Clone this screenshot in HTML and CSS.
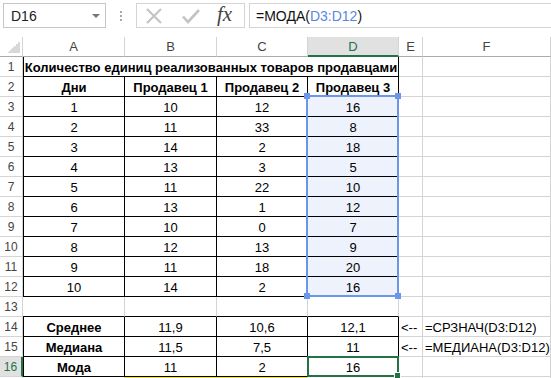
FILE: index.html
```html
<!DOCTYPE html>
<html lang="ru">
<head>
<meta charset="UTF-8">
<title>МОДА</title>
<link rel="stylesheet" href="styles.css">
</head>
<body>
    <!-- formula bar -->
    <div class="bar">
        <div class="namebox"><span>D16</span><span class="arrow"></span></div>
        <div class="grip"></div>
        <div class="fxbox">
            <svg class="ico-x" width="16" height="16" viewBox="0 0 16 16"><path d="M1 1L15 15M15 1L1 15" stroke="#c4c4c4" stroke-width="2.2" fill="none"/></svg>
            <svg class="ico-ok" width="18" height="15" viewBox="0 0 18 15"><path d="M1 7.5L6 13L17 1" stroke="#c4c4c4" stroke-width="2.6" fill="none"/></svg>
            <span class="fx">fx</span>
        </div>
        <div class="formula">=МОДА(<span class="ref">D3:D12</span>)</div>
    </div>

    <!-- sheet -->
    <div class="sheet">
        <div class="corner"><span></span></div>
        <div class="ch">A</div><div class="ch">B</div><div class="ch">C</div><div class="ch on">D</div><div class="ch">E</div><div class="ch">F</div>

        <div class="rh">1</div><div class="c t l b span4">Количество единиц реализованных товаров продавцами</div><div class="c"></div><div class="c"></div>
        <div class="rh">2</div><div class="c t l b">Дни</div><div class="c t b">Продавец 1</div><div class="c t b">Продавец 2</div><div class="c t b">Продавец 3</div><div class="c"></div><div class="c"></div>
        <div class="rh">3</div><div class="c t l">1</div><div class="c t">10</div><div class="c t">12</div><div class="c t hl anchor">16<div class="range"><i class="h1"></i><i class="h2"></i><i class="h3"></i><i class="h4"></i></div></div><div class="c"></div><div class="c"></div>
        <div class="rh">4</div><div class="c t l">2</div><div class="c t">11</div><div class="c t">33</div><div class="c t hl">8</div><div class="c"></div><div class="c"></div>
        <div class="rh">5</div><div class="c t l">3</div><div class="c t">14</div><div class="c t">2</div><div class="c t hl">18</div><div class="c"></div><div class="c"></div>
        <div class="rh">6</div><div class="c t l">4</div><div class="c t">13</div><div class="c t">3</div><div class="c t hl">5</div><div class="c"></div><div class="c"></div>
        <div class="rh">7</div><div class="c t l">5</div><div class="c t">11</div><div class="c t">22</div><div class="c t hl">10</div><div class="c"></div><div class="c"></div>
        <div class="rh">8</div><div class="c t l">6</div><div class="c t">13</div><div class="c t">1</div><div class="c t hl">12</div><div class="c"></div><div class="c"></div>
        <div class="rh">9</div><div class="c t l">7</div><div class="c t">10</div><div class="c t">0</div><div class="c t hl">7</div><div class="c"></div><div class="c"></div>
        <div class="rh">10</div><div class="c t l">8</div><div class="c t">12</div><div class="c t">13</div><div class="c t hl">9</div><div class="c"></div><div class="c"></div>
        <div class="rh">11</div><div class="c t l">9</div><div class="c t">11</div><div class="c t">18</div><div class="c t hl">20</div><div class="c"></div><div class="c"></div>
        <div class="rh">12</div><div class="c t l">10</div><div class="c t">14</div><div class="c t">2</div><div class="c t hl">16</div><div class="c"></div><div class="c"></div>
        <div class="rh">13</div><div class="c tb"></div><div class="c tb"></div><div class="c tb"></div><div class="c tb"></div><div class="c"></div><div class="c"></div>
        <div class="rh">14</div><div class="c t l b">Среднее</div><div class="c t">11,9</div><div class="c t">10,6</div><div class="c t">12,1</div><div class="c left">&lt;--</div><div class="c left">=СРЗНАЧ(D3:D12)</div>
        <div class="rh">15</div><div class="c t l b">Медиана</div><div class="c t">11,5</div><div class="c t">7,5</div><div class="c t">11</div><div class="c left">&lt;--</div><div class="c left">=МЕДИАНА(D3:D12)</div>
        <div class="rh on">16</div><div class="c t l b">Мода</div><div class="c t">11</div><div class="c t">2</div><div class="c t anchor">16<div class="active"><i></i></div></div><div class="c"></div><div class="c"></div>
        <div class="stub"></div><div class="stub"></div><div class="stub yl"></div><div class="stub yl"></div><div class="stub"></div><div class="stub"></div><div class="stub"></div>
    </div>
</body>
</html>
```

FILE: styles.css
```css
/* sheet look, excel 2013 style */
body {
    margin: 0;
    font-family: "Liberation Sans", Arial, sans-serif;
    background: #fff;
    color: #000;
}

/* formula bar */
.bar {
    display: flex;
    align-items: flex-start;
    height: 34px;
    padding: 3px 0 0 3px;
    box-sizing: border-box;
}
.namebox {
    width: 103px;
    height: 25px;
    box-sizing: border-box;
    border: 1px solid #c6c6c6;
    display: flex;
    align-items: center;
    justify-content: space-between;
    padding: 0 5px 0 7px;
    font-size: 14px;
    color: #222;
}
.arrow {
    width: 0;
    height: 0;
    border-left: 4px solid transparent;
    border-right: 4px solid transparent;
    border-top: 4px solid #777;
}
.grip {
    width: 2px;
    height: 11px;
    margin: 8px 14px 0 14px;
    background: linear-gradient(#a8a8a8 2px, transparent 2px) 0 0 / 2px 4px repeat-y;
}
.fxbox {
    width: 109px;
    height: 25px;
    box-sizing: border-box;
    border: 1px solid #d4d4d4;
    display: flex;
    align-items: center;
    padding-left: 9px;
}
.ico-ok {
    margin-left: 20px;
    margin-top: 2px;
}
.fx {
    margin-left: 17px;
    font-family: "Liberation Serif", serif;
    font-style: italic;
    font-size: 21px;
    color: #444;
    margin-top: -3px;
}
.formula {
    flex: 1;
    margin-left: 4px;
    height: 25px;
    box-sizing: border-box;
    border: 1px solid #d4d4d4;
    border-right: none;
    padding-left: 6px;
    display: flex;
    align-items: center;
    font-size: 14px;
    color: #111;
}
.ref {
    color: #5b86e0;
}

/* grid */
.sheet {
    display: grid;
    grid-template-columns: 23px 102px 92px 91px 91px 24px 128px;
    grid-template-rows: 23px repeat(16, 20px) 1px;
    font-size: 13px;
}
.corner {
    display: flex;
    align-items: flex-end;
    justify-content: flex-end;
    margin-top: 3px;
    padding: 0 2px 3px 0;
    border-right: 1px solid #d4d4d4;
    border-bottom: 1px solid #ababab;
}
.corner span {
    width: 12px;
    height: 12px;
    background: linear-gradient(to bottom right, transparent 50%, #d8d8d8 50%);
}
.ch {
    margin-top: 3px;
    display: flex;
    align-items: center;
    justify-content: center;
    border-right: 1px solid #d4d4d4;
    border-bottom: 1px solid #ababab;
    color: #444;
    font-size: 13px;
}
.ch.on {
    background: #e1e1e1;
    color: #217346;
    border-bottom: 2px solid #217346;
}
.rh {
    display: flex;
    align-items: center;
    justify-content: center;
    padding-top: 1px;
    border-right: 1px solid #d4d4d4;
    border-bottom: 1px solid #d4d4d4;
    color: #444;
    font-size: 12px;
}
.rh.on {
    background: #e1e1e1;
    color: #217346;
    border-right: 2px solid #217346;
}
.c {
    display: flex;
    align-items: center;
    justify-content: center;
    padding-top: 1px;
    border-right: 1px solid #d4d4d4;
    border-bottom: 1px solid #d4d4d4;
    white-space: nowrap;
}
.c.t {
    border-right-color: #000;
    border-bottom-color: #000;
}
.c.l {
    border-left: 1px solid #000;
}
.c.tb {
    border-bottom-color: #000;
}
.b {
    font-weight: bold;
}
.span4 {
    grid-column: span 4;
}
.left {
    justify-content: flex-start;
    padding-left: 2px;
}
.hl {
    background: #edf2fc;
}
.stub {
    border-right: 1px solid #d4d4d4;
}
.yl {
    background: #ffe800;
}

/* reference range + active cell, drawn over the cells */
.anchor {
    position: relative;
}
.range {
    position: absolute;
    left: -2px;
    top: -2px;
    width: 93px;
    height: 202px;
    box-sizing: border-box;
    border: 2px solid #6b97ea;
    z-index: 2;
}
.range i {
    position: absolute;
    width: 6px;
    height: 6px;
    background: #6b97ea;
}
.range .h1 { left: -4px; top: -4px; }
.range .h2 { right: -4px; top: -4px; }
.range .h3 { left: -4px; bottom: -4px; }
.range .h4 { right: -4px; bottom: -4px; }
.active {
    position: absolute;
    left: -1px;
    top: -1px;
    width: 92px;
    height: 21px;
    box-sizing: border-box;
    border: 2px solid #217346;
    z-index: 2;
}
.active i {
    position: absolute;
    right: -4px;
    bottom: -4px;
    width: 5px;
    height: 5px;
    background: #217346;
    border: 1px solid #fff;
}
```
